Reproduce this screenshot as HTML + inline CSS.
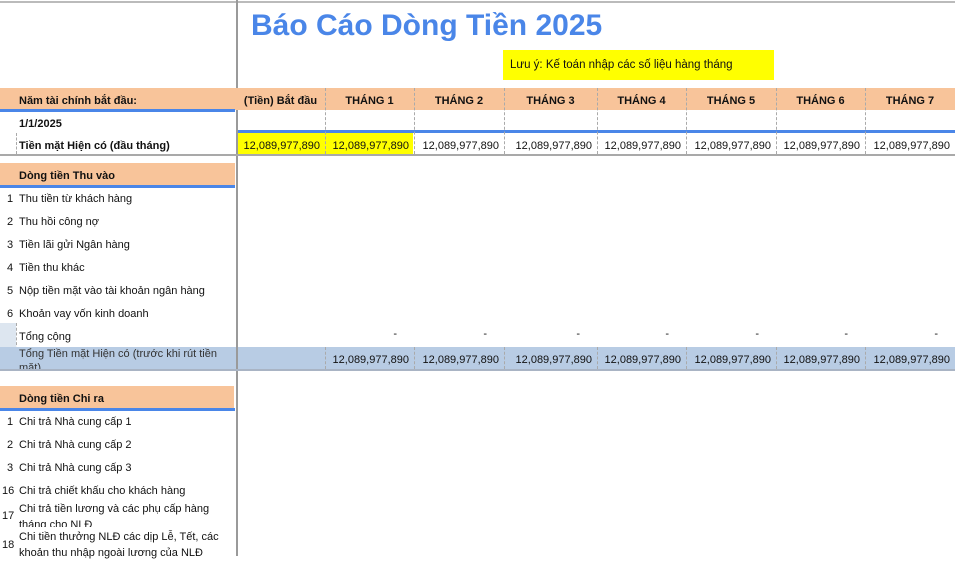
<!DOCTYPE html>
<html><head><meta charset="utf-8"><style>
*{margin:0;padding:0;box-sizing:border-box}
body{width:955px;height:556px;overflow:hidden;background:#fff;position:relative;font-family:"Liberation Sans","Noto Sans CJK SC",sans-serif;font-size:11px;color:#111}
.a{position:absolute;white-space:nowrap}
.or{position:absolute;background:#f8c49a}
.bl{position:absolute;background:#4a86e8}
.b{font-weight:bold}
.c{position:absolute;text-align:center}
.r{position:absolute;text-align:right}
.a,.c,.r{padding-top:2px}
.dl{position:absolute;border-left:1px dashed #aaa}
</style></head><body>
<div class="a" style="left:0;top:1px;width:955px;height:2px;background:#bbb;padding:0"></div>
<div class="a" style="left:236px;top:0;width:2px;height:556px;background:#9a9a9a;padding:0"></div>
<div class="a b" style="left:251px;top:9px;font-size:30px;color:#4a86e8;padding:0">Báo Cáo Dòng Tiền 2025</div>
<div class="a" style="left:503px;top:50px;width:271px;height:30px;background:#ffff00;font-size:11.5px;padding:9px 0 0 7px">Lưu ý: Kế toán nhập các số liệu hàng tháng</div>

<div class="or" style="left:0;top:88px;width:955px;height:22px"></div>
<div class="bl" style="left:0;top:109px;width:235px;height:3px"></div>
<div class="a b" style="left:19px;top:93px">Năm tài chính bắt đầu:</div>
<div class="c b" style="left:236px;top:93px;width:89px">(Tiền) Bắt đầu</div>
<div class="c b" style="left:325px;top:93px;width:89px">THÁNG 1</div>
<div class="c b" style="left:414px;top:93px;width:90px">THÁNG 2</div>
<div class="c b" style="left:504px;top:93px;width:93px">THÁNG 3</div>
<div class="c b" style="left:597px;top:93px;width:89px">THÁNG 4</div>
<div class="c b" style="left:686px;top:93px;width:90px">THÁNG 5</div>
<div class="c b" style="left:776px;top:93px;width:89px">THÁNG 6</div>
<div class="c b" style="left:865px;top:93px;width:90px">THÁNG 7</div>
<div class="a b" style="left:19px;top:116px">1/1/2025</div>

<div class="a" style="left:238px;top:133px;width:175px;height:21px;background:#ffff00;padding:0"></div>
<div class="bl" style="left:238px;top:130px;width:717px;height:3px"></div>
<div class="a" style="left:0;top:154px;width:955px;height:2px;background:#a9a9a9;padding:0"></div>
<div class="a b" style="left:19px;top:138px">Tiền mặt Hiện có (đầu tháng)</div>
<div class="dl" style="left:16px;top:133px;height:21px"></div>

<div class="dl" style="left:325px;top:88px;height:66px"></div>
<div class="dl" style="left:414px;top:88px;height:66px"></div>
<div class="dl" style="left:504px;top:88px;height:66px"></div>
<div class="dl" style="left:597px;top:88px;height:66px"></div>
<div class="dl" style="left:686px;top:88px;height:66px"></div>
<div class="dl" style="left:776px;top:88px;height:66px"></div>
<div class="dl" style="left:865px;top:88px;height:66px"></div>

<div class="r" style="left:236px;top:138px;width:84px">12,089,977,890</div>
<div class="r" style="left:325px;top:138px;width:84px">12,089,977,890</div>
<div class="r" style="left:414px;top:138px;width:85px">12,089,977,890</div>
<div class="r" style="left:504px;top:138px;width:88px">12,089,977,890</div>
<div class="r" style="left:597px;top:138px;width:84px">12,089,977,890</div>
<div class="r" style="left:686px;top:138px;width:85px">12,089,977,890</div>
<div class="r" style="left:776px;top:138px;width:84px">12,089,977,890</div>
<div class="r" style="left:865px;top:138px;width:85px">12,089,977,890</div>

<div class="or" style="left:0;top:163px;width:235px;height:22px"></div>
<div class="bl" style="left:0;top:185px;width:235px;height:3px"></div>
<div class="a b" style="left:19px;top:168px">Dòng tiền Thu vào</div>
<div class="a" style="left:7px;top:191px">1</div><div class="a" style="left:19px;top:191px">Thu tiền từ khách hàng</div>
<div class="a" style="left:7px;top:214px">2</div><div class="a" style="left:19px;top:214px">Thu hồi công nợ</div>
<div class="a" style="left:7px;top:237px">3</div><div class="a" style="left:19px;top:237px">Tiền lãi gửi Ngân hàng</div>
<div class="a" style="left:7px;top:260px">4</div><div class="a" style="left:19px;top:260px">Tiền thu khác</div>
<div class="a" style="left:7px;top:283px">5</div><div class="a" style="left:19px;top:283px">Nộp tiền mặt vào tài khoản ngân hàng</div>
<div class="a" style="left:7px;top:306px">6</div><div class="a" style="left:19px;top:306px">Khoản vay vốn kinh doanh</div>
<div class="a" style="left:0;top:323px;width:16px;height:24px;background:#dde6f0;padding:0"></div>
<div class="dl" style="left:16px;top:323px;height:46px"></div>
<div class="a" style="left:19px;top:329px">Tổng cộng</div>
<div class="r" style="left:325px;top:326px;width:72px">-</div>
<div class="r" style="left:414px;top:326px;width:73px">-</div>
<div class="r" style="left:504px;top:326px;width:76px">-</div>
<div class="r" style="left:597px;top:326px;width:72px">-</div>
<div class="r" style="left:686px;top:326px;width:73px">-</div>
<div class="r" style="left:776px;top:326px;width:72px">-</div>
<div class="r" style="left:865px;top:326px;width:73px">-</div>

<div class="a" style="left:0;top:347px;width:955px;height:22px;background:#b8cce4;padding:0"></div>
<div class="a" style="left:0;top:369px;width:955px;height:2px;background:#a9b4c4;padding:0"></div>
<div class="a" style="left:19px;top:346px;height:23px;overflow:hidden;white-space:normal;width:220px;line-height:14px;color:#333;padding-top:1px">Tổng Tiền mặt Hiện có (trước khi rút tiền mặt)</div>
<div class="a" style="left:236px;top:347px;width:2px;height:22px;background:#9a9a9a;padding:0"></div>
<div class="dl" style="left:325px;top:347px;height:22px"></div>
<div class="dl" style="left:414px;top:347px;height:22px"></div>
<div class="dl" style="left:504px;top:347px;height:22px"></div>
<div class="dl" style="left:597px;top:347px;height:22px"></div>
<div class="dl" style="left:686px;top:347px;height:22px"></div>
<div class="dl" style="left:776px;top:347px;height:22px"></div>
<div class="dl" style="left:865px;top:347px;height:22px"></div>
<div class="r" style="left:325px;top:352px;width:84px">12,089,977,890</div>
<div class="r" style="left:414px;top:352px;width:85px">12,089,977,890</div>
<div class="r" style="left:504px;top:352px;width:88px">12,089,977,890</div>
<div class="r" style="left:597px;top:352px;width:84px">12,089,977,890</div>
<div class="r" style="left:686px;top:352px;width:85px">12,089,977,890</div>
<div class="r" style="left:776px;top:352px;width:84px">12,089,977,890</div>
<div class="r" style="left:865px;top:352px;width:85px">12,089,977,890</div>

<div class="or" style="left:0;top:386px;width:234px;height:22px"></div>
<div class="bl" style="left:0;top:408px;width:235px;height:3px"></div>
<div class="a b" style="left:19px;top:391px">Dòng tiền Chi ra</div>
<div class="a" style="left:7px;top:414px">1</div><div class="a" style="left:19px;top:414px">Chi trả Nhà cung cấp 1</div>
<div class="a" style="left:7px;top:437px">2</div><div class="a" style="left:19px;top:437px">Chi trả Nhà cung cấp 2</div>
<div class="a" style="left:7px;top:460px">3</div><div class="a" style="left:19px;top:460px">Chi trả Nhà cung cấp 3</div>
<div class="a" style="left:2px;top:483px">16</div><div class="a" style="left:19px;top:483px">Chi trả chiết khấu cho khách hàng</div>
<div class="a" style="left:2px;top:508px">17</div>
<div class="a" style="left:19px;top:499px;height:28px;overflow:hidden;white-space:normal;width:215px;line-height:16px">Chi trả tiền lương và các phụ cấp hàng tháng cho NLĐ</div>
<div class="a" style="left:2px;top:537px">18</div>
<div class="a" style="left:19px;top:527px;white-space:normal;width:220px;line-height:16px">Chi tiền thưởng NLĐ các dịp Lễ, Tết, các khoản thu nhập ngoài lương của NLĐ</div>
</body></html>
